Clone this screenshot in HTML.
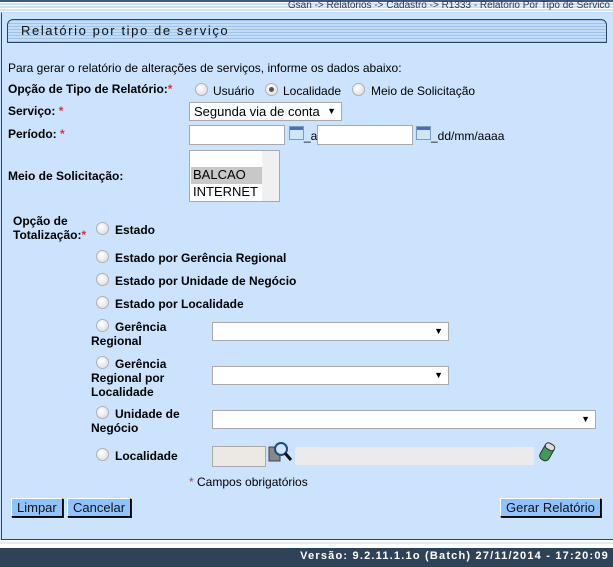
<!DOCTYPE html>
<html><head><meta charset="utf-8"><style>
*{margin:0;padding:0;box-sizing:border-box}
body{width:613px;height:567px;overflow:hidden;background:#cbe3fc;font-family:"Liberation Sans",Arial,sans-serif;font-size:12px;color:#000;position:relative}
.a{position:absolute;white-space:nowrap}
.b{font-weight:bold}
.r{color:#e0303a}
.rad{position:absolute;width:13px;height:13px;border-radius:50%;background:radial-gradient(circle at 40% 35%,#fff,#d8d8d8);border:1px solid #b0b0b0}
.rad.on::after{content:"";position:absolute;left:3px;top:3px;width:5px;height:5px;border-radius:50%;background:#555}
.sel{position:absolute;background:#fff;border:1px solid #a9a9a9;height:19px}
.sel::after{content:"▼";position:absolute;right:5px;top:3px;font-size:9px}
.inp{position:absolute;background:#fff;border:1px solid #a9a9a9;height:20px}
.cal{position:absolute;width:15px;height:14px;background:linear-gradient(#4a6fb3 0 3px,#cfe6f7 3px);border:1px solid #7a9ac0}
.btn{position:absolute;background:#8fc3ff;border:1px solid #000;border-top-color:#fff;border-left-color:#fff;box-shadow:1px 1px 0 #0a1a3a;height:19px;font-size:13px;padding:1px 5px;color:#111}
.ind{padding-left:24px}
</style></head><body>
<div class="a" style="left:0;top:0;width:613px;height:12px;background:repeating-linear-gradient(#fff 0 1px,#cfe2f5 1px 3px);border-top:2px solid #3c5a88"></div>
<div class="a" style="right:3px;top:0px;font-size:10px;line-height:11px;color:#334">Gsan -&gt; Relatorios -&gt; Cadastro -&gt; R1333 - Relatorio Por Tipo de Servico</div>
<div class="a" style="left:1px;top:12px;width:612px;height:528px;border:1px solid #2a4466;border-right:none;border-top:1px solid #c5d8ea"></div>
<div class="a" style="left:7px;top:19px;width:600px;height:24px;border:1px solid #2a4466;border-radius:6px 6px 0 0;background:repeating-linear-gradient(#9dc4ef 0 1px,#c4dcf6 1px 3px)"></div>
<div class="a" style="left:21px;top:23px;font-size:13px;letter-spacing:1.6px;color:#111">Relatório por tipo de serviço</div>
<div class="a" style="left:8px;top:61px">Para gerar o relatório de alterações de serviços, informe os dados abaixo:</div>
<div class="a b" style="left:8px;top:82px">Opção de Tipo de Relatório:<span class="r">*</span></div>
<div class="rad" style="left:195px;top:83px"></div><div class="a" style="left:213px;top:84px">Usuário</div>
<div class="rad on" style="left:265px;top:83px"></div><div class="a" style="left:283px;top:84px">Localidade</div>
<div class="rad" style="left:352px;top:83px"></div><div class="a" style="left:371px;top:84px">Meio de Solicitação</div>
<div class="a b" style="left:8px;top:104px">Serviço: <span class="r">*</span></div>
<div class="sel" style="left:189px;top:102px;width:153px;font-size:13px;padding:1px 4px">Segunda via de conta</div>
<div class="a b" style="left:8px;top:127px">Período: <span class="r">*</span></div>
<div class="inp" style="left:189px;top:125px;width:96px"></div>
<div class="cal" style="left:289px;top:126px"></div><div class="a" style="left:304px;top:129px">_a</div>
<div class="inp" style="left:317px;top:125px;width:96px"></div>
<div class="cal" style="left:416px;top:126px"></div><div class="a" style="left:431px;top:129px">_dd/mm/aaaa</div>
<div class="a b" style="left:8px;top:169px">Meio de Solicitação:</div>
<div class="a" style="left:189px;top:150px;width:91px;height:52px;background:#fff;border:1px solid #a9a9a9;font-size:13px">
<div style="position:absolute;right:0;top:0;width:17px;height:50px;background:#f0f0f0"></div>
<div style="position:absolute;left:1px;top:16px;width:71px;height:17px;background:#c8c8c8;padding-left:2px">BALCAO</div>
<div style="position:absolute;left:1px;top:33px;padding-left:2px">INTERNET</div></div>
<div class="a b" style="left:13px;top:214px;line-height:14px">Opção de<br>Totalização:<span class="r">*</span></div>
<div class="rad" style="left:96px;top:222px"></div><div class="a b" style="left:115px;top:223px">Estado</div>
<div class="rad" style="left:96px;top:250px"></div><div class="a b" style="left:115px;top:251px">Estado por Gerência Regional</div>
<div class="rad" style="left:96px;top:273px"></div><div class="a b" style="left:115px;top:274px">Estado por Unidade de Negócio</div>
<div class="rad" style="left:96px;top:296px"></div><div class="a b" style="left:115px;top:297px">Estado por Localidade</div>
<div class="rad" style="left:96px;top:319px"></div><div class="a b" style="left:91px;top:320px;line-height:14px"><span class="ind">Gerência</span><br>Regional</div>
<div class="sel" style="left:212px;top:322px;width:237px"></div>
<div class="rad" style="left:96px;top:356px"></div><div class="a b" style="left:91px;top:357px;line-height:14px"><span class="ind">Gerência</span><br>Regional por<br>Localidade</div>
<div class="sel" style="left:212px;top:366px;width:237px"></div>
<div class="rad" style="left:96px;top:406px"></div><div class="a b" style="left:91px;top:407px;line-height:14px"><span class="ind">Unidade de</span><br>Negócio</div>
<div class="sel" style="left:212px;top:410px;width:384px"></div>
<div class="rad" style="left:96px;top:448px"></div><div class="a b" style="left:115px;top:449px">Localidade</div>
<div class="a" style="left:212px;top:446px;width:54px;height:21px;background:#ece9e4;border:1px solid #aaa"></div>
<svg class="a" style="left:268px;top:441px" width="26" height="24"><rect x="1" y="6" width="11" height="14" fill="#888" stroke="#444"/><circle cx="13" cy="8" r="6" fill="#cfe6ff" stroke="#1d4a8a" stroke-width="2"/><path d="M17 12 L23 19" stroke="#111" stroke-width="3"/></svg>
<div class="a" style="left:295px;top:447px;width:239px;height:18px;background:#ebebeb"></div>
<svg class="a" style="left:537px;top:441px" width="20" height="22"><g transform="rotate(30 10 11)"><rect x="5" y="2" width="10" height="18" rx="4" fill="#3e9a55" stroke="#333"/><rect x="5" y="2" width="10" height="6" rx="3" fill="#ddd" stroke="#333"/></g></svg>
<div class="a" style="left:189px;top:475px"><span class="r">*</span> Campos obrigatórios</div>
<div class="btn" style="left:11px;top:498px">Limpar</div>
<div class="btn" style="left:67px;top:498px">Cancelar</div>
<div class="btn" style="left:500px;top:498px">Gerar Relatório</div>
<div class="a" style="left:0;top:540px;width:613px;height:8px;background:linear-gradient(#fff 0 2px,#e4edf6 2px 4px,#fff 4px)"></div>
<div class="a" style="left:0;top:548px;width:613px;height:19px;background:#2f4358"></div>
<div class="a b" style="right:4px;top:550px;color:#fff;font-size:11px;letter-spacing:1.2px">Versão: 9.2.11.1.1o (Batch) 27/11/2014 - 17:20:09</div>
</body></html>
